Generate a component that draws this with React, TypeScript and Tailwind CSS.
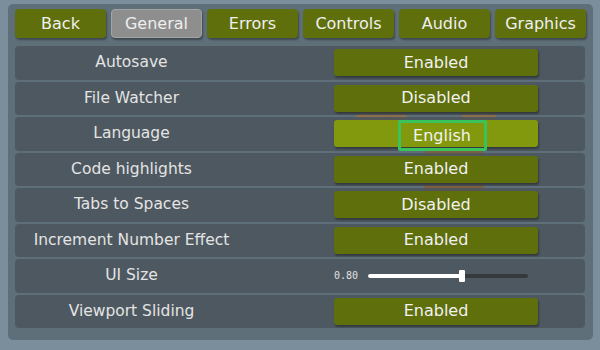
import { useState } from "react";

const tabs = ["Back", "General", "Errors", "Controls", "Audio", "Graphics"];

type Row =
	| { label: string; kind: "toggle"; value: string; focus?: boolean }
	| { label: string; kind: "slider"; value: number };

const rows: Row[] = [
	{ label: "Autosave", kind: "toggle", value: "Enabled" },
	{ label: "File Watcher", kind: "toggle", value: "Disabled" },
	{ label: "Language", kind: "toggle", value: "English", focus: true },
	{ label: "Code highlights", kind: "toggle", value: "Enabled" },
	{ label: "Tabs to Spaces", kind: "toggle", value: "Disabled" },
	{ label: "Increment Number Effect", kind: "toggle", value: "Enabled" },
	{ label: "UI Size", kind: "slider", value: 0.8 },
	{ label: "Viewport Sliding", kind: "toggle", value: "Enabled" },
];

function Mascot() {
	// faint character art sitting behind the option rows
	return (
		<svg
			className="absolute left-[338px] top-[96px] opacity-70"
			width="160"
			height="100"
			viewBox="0 0 160 100"
		>
			<ellipse cx="35" cy="22" rx="28" ry="14" fill="#a0703a" />
			<path d="M20 12 q10 -6 22 0" stroke="#5a3a1c" strokeWidth="2" fill="none" />
			<ellipse cx="133" cy="20" rx="18" ry="14" fill="#a0703a" />
			<path d="M125 10 q8 -4 16 2" stroke="#5a3a1c" strokeWidth="2" fill="none" />
			<rect x="78" y="50" width="60" height="45" rx="6" fill="#8a5a2a" />
		</svg>
	);
}

export default function App() {
	const [tab, setTab] = useState("General");

	return (
		<div
			className="w-[600px] h-[350px] bg-[#7a8f9b] pt-[4px] pl-[8px] overflow-hidden"
			style={{ fontFamily: "'DejaVu Sans', 'Open Sans', sans-serif" }}
		>
			<div className="relative w-[585px] h-[336px] bg-[#5e6f79] rounded-[5px] pl-[6px] pt-[5px] flex flex-col">
				<Mascot />
				<div className="relative flex gap-[5px] h-[29px] pl-[1px]">
					{tabs.map((t) => (
						<button
							key={t}
							onClick={() => setTab(t)}
							className={
								t === tab
									? "w-[91px] h-[29px] rounded-[4px] bg-[#8e8e8e] border border-[#a4a4a4] text-[#eeeeee] text-[16px] shadow-[1px_2px_2px_rgba(0,0,0,0.35)]"
									: "w-[91px] h-[29px] rounded-[4px] bg-[#5e6f0b] text-[#f0f0f0] text-[16px] shadow-[1px_2px_2px_rgba(0,0,0,0.35)]"
							}
						>
							{t}
						</button>
					))}
				</div>
				<div className="relative flex flex-col gap-[2px] mt-[8px] pl-[1px] w-[571px]">
					{rows.map((r) => (
						<div
							key={r.label}
							className="flex items-center h-[33.5px] rounded-[4px] bg-[#4b555c]/85"
						>
							<div className="w-[233px] text-center text-[15.5px] text-[#e4e4e4]">
								{r.label}
							</div>
							{r.kind === "toggle" ? (
								<div
									className={
										r.focus
											? "ml-[86px] w-[204px] h-[27px] rounded-[3px] bg-[#82980d] flex items-center justify-center shadow-[1px_2px_2px_rgba(0,0,0,0.35)]"
											: "ml-[86px] w-[204px] h-[27px] rounded-[3px] bg-[#5e6f0b] flex items-center justify-center shadow-[1px_2px_2px_rgba(0,0,0,0.35)]"
									}
								>
									<span
										className={
											r.focus
												? "text-[16px] text-[#f2f2f2] border-[3px] border-[#39c35a] rounded-[2px] w-[89px] h-[31px] flex items-center justify-center translate-x-[6px] translate-y-[2px]"
												: "text-[16px] text-[#f2f2f2]"
										}
									>
										{r.value}
									</span>
								</div>
							) : (
								<div className="ml-[86px] flex items-center">
									<span
										className="text-[10px] text-[#e0e0e0] w-[34px]"
										style={{ fontFamily: "'DejaVu Sans Mono', monospace" }}
									>
										{r.value.toFixed(2)}
									</span>
									<div className="relative w-[160px] h-[4px] rounded-full bg-[#35393c]">
										<div
											className="absolute left-0 top-0 h-[4px] rounded-full bg-white"
											style={{ width: `${r.value * 118}px` }}
										/>
										<div
											className="absolute top-[-4px] w-[6px] h-[12px] rounded-[1px] bg-white"
											style={{ left: `${r.value * 118 - 3}px` }}
										/>
									</div>
								</div>
							)}
						</div>
					))}
				</div>
			</div>
		</div>
	);
}
